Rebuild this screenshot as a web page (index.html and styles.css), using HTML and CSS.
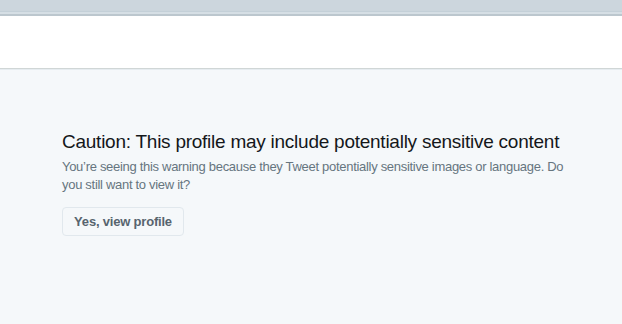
FILE: index.html
```html
<!DOCTYPE html>
<html>
<head>
<meta charset="utf-8">
<link rel="stylesheet" href="styles.css">
</head>
<body>
<div class="topbar"></div>
<div class="header"></div>
<main class="content">
  <div class="warning">
    <h1 class="title">Caution: This profile may include potentially sensitive content</h1>
    <p class="text">You’re seeing this warning because they Tweet potentially sensitive images or language. Do you still want to view it?</p>
    <button class="btn">Yes, view profile</button>
  </div>
</main>
</body>
</html>
```
FILE: styles.css
```css
html, body {
  margin: 0;
  padding: 0;
  height: 100%;
}
body {
  background: #f5f8fa;
  font-family: "Liberation Sans", Arial, sans-serif;
  overflow: hidden;
}
.topbar {
  height: 12px;
  background: #ccd6dd;
  border-bottom: 2px solid #d6dfe5;
  box-shadow: inset 0 -1px 0 #c4d0d8;
}
.header {
  height: 52px;
  background: #fff;
  border-top: 2px solid #bcc7ce;
  border-bottom: 1px solid #d0d6d6;
  box-shadow: 0 1px 0 #e6ecf0;
}
.content {
  padding: 61px 62px 0;
}
.warning {
  width: 506px;
}
.title {
  margin: 0;
  font-size: 19px;
  letter-spacing: -0.25px;
  font-weight: normal;
  color: #14171a;
  line-height: 24px;
  white-space: nowrap;
}
.text {
  margin: 4px 0 0;
  font-size: 13px;
  letter-spacing: -0.3px;
  line-height: 18px;
  color: #66757f;
}
.btn {
  margin-top: 13px;
  width: 122px;
  height: 29px;
  background: #f5f8fa;
  border: 1px solid #e1e8ed;
  border-radius: 4px;
  font-family: inherit;
  font-size: 13px;
  font-weight: bold;
  letter-spacing: -0.2px;
  color: #57646e;
  padding: 0;
}
```
